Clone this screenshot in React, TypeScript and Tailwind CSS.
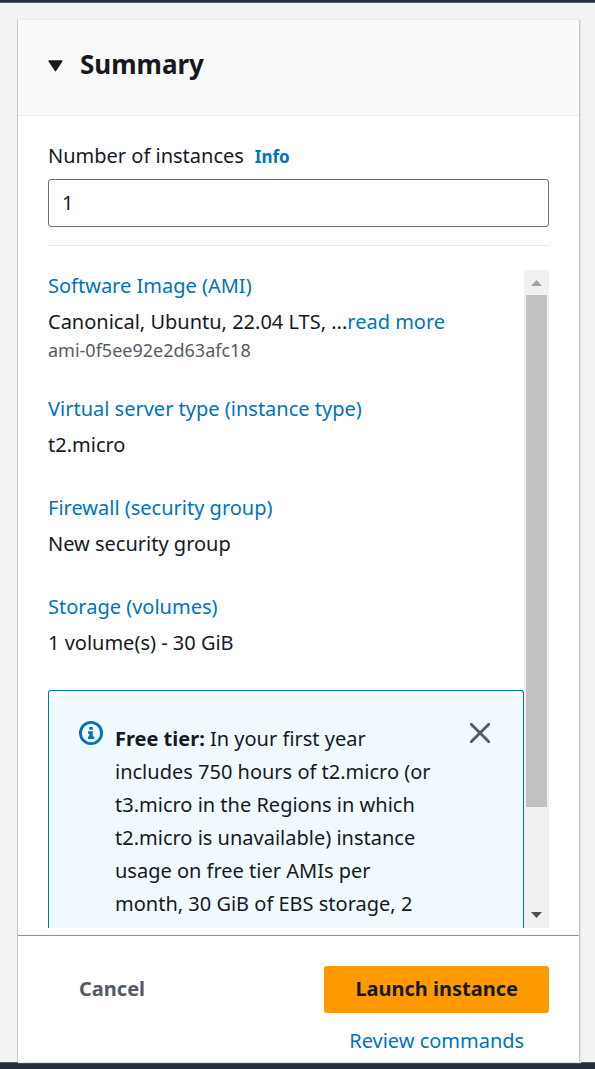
import type { ReactNode } from "react";

function SummaryItem({ title, children }: { title: string; children: ReactNode }) {
  return (
    <section>
      <h3 className="leading-[31px]">
        <a href="#" className="text-[#0073bb]">{title}</a>
      </h3>
      <div className="mt-1 leading-[33px]">{children}</div>
    </section>
  );
}

function InfoIcon() {
  return (
    <svg viewBox="0 0 24 24" className="size-6 shrink-0 text-[#0073bb]" aria-hidden="true">
      <circle cx="12" cy="12" r="10.6" fill="none" stroke="currentColor" strokeWidth="2.8" />
      <path d="M10.2 6h3.6v2.8h-3.6z M9 10.2h4.8v5.2h1.4v2.6H9v-2.6h1.2v-2.6H9z" fill="currentColor" />
    </svg>
  );
}

function ScrollTrack() {
  return (
    <div className="flex w-[25px] shrink-0 flex-col items-center bg-[#f1f1f1]" aria-hidden="true">
      <svg viewBox="0 0 25 25" className="size-[25px] shrink-0">
        <path d="M12.5 10 18 16H7z" fill="#a3a3a3" />
      </svg>
      <div className="flex min-h-0 w-full flex-1 flex-col px-[2px]">
        <div className="grow-[512] bg-[#c1c1c1]" />
        <div className="grow-[96]" />
      </div>
      <svg viewBox="0 0 25 25" className="size-[25px] shrink-0">
        <path d="M7 9h11l-5.5 6z" fill="#505050" />
      </svg>
    </div>
  );
}

export default function App() {
  return (
    <div className="flex h-screen flex-col border-t-2 border-b-[6px] border-[#232f3e] bg-[#f2f3f3] font-['Noto_Sans','Open_Sans',sans-serif] text-[20px] text-[#16191f]">
      <div className="flex min-h-0 flex-1 flex-col border-y border-[#545b64] pr-[15px] pl-[17px]">
        <main className="mt-4 flex min-h-0 flex-1 flex-col border-x border-t border-x-[#c3caca] border-t-[#eaeded] bg-white shadow-[1px_1px_1px_0_#dfe3e3]">
          <header className="flex h-24 shrink-0 items-center border-b border-[#eaeded] bg-[#fafafa] px-[30px] pb-[6px]">
            <h2>
              <button type="button" className="flex items-center gap-[17px] text-[26px] font-bold">
                <svg viewBox="0 0 15 14" className="h-[14px] w-[15px]" aria-hidden="true">
                  <path d="M1.2 3h12.6L7.5 12.6z" fill="currentColor" stroke="currentColor" strokeWidth="1.5" strokeLinejoin="round" />
                </svg>
                Summary
              </button>
            </h2>
          </header>

          <div className="flex min-h-0 flex-1 flex-col px-[30px] pt-[23px] pb-[7px]">
            <div className="flex items-baseline gap-[11px] leading-[33px]">
              <label htmlFor="instances">Number of instances</label>
              <a href="#" className="text-[17px] font-bold text-[#0073bb]">Info</a>
            </div>
            <input
              id="instances"
              type="text"
              defaultValue="1"
              className="mt-[6px] h-12 w-full shrink-0 rounded-[3px] border border-[#687078] bg-white px-[13px] pb-[2px]"
            />
            <hr className="mt-[18px] border-[#eaeded]" />

            <div className="mt-6 flex min-h-0 flex-1">
              <div className="flex min-w-0 flex-1 flex-col overflow-hidden">
                <div className="flex shrink-0 flex-col gap-[31px]">
                  <SummaryItem title="Software Image (AMI)">
                    <p>
                      Canonical, Ubuntu, 22.04 LTS, ...
                      <a href="#" className="text-[#0073bb]">read more</a>
                    </p>
                    <p className="text-[18px] leading-6 text-[#545b64]">ami-0f5ee92e2d63afc18</p>
                  </SummaryItem>
                  <SummaryItem title="Virtual server type (instance type)">t2.micro</SummaryItem>
                  <SummaryItem title="Firewall (security group)">New security group</SummaryItem>
                  <SummaryItem title="Storage (volumes)">1 volume(s) - 30 GiB</SummaryItem>
                </div>

                <div role="note" className="mt-[31px] flex flex-1 items-start rounded-t-[3px] border border-b-0 border-[#0073bb] bg-[#f1faff] pt-[30px] pr-[31px] pl-[30px]">
                  <InfoIcon />
                  <p className="ml-3 flex-1 pt-px leading-[33px]">
                    <strong>Free tier:</strong> In your first year includes 750 hours of t2.micro (or t3.micro in
                    the Regions in which t2.micro is unavailable) instance usage on free tier AMIs per month, 30
                    GiB of EBS storage, 2
                  </p>
                  <button type="button" aria-label="Dismiss" className="ml-8 shrink-0 text-[#545b64]">
                    <svg viewBox="0 0 24 24" className="size-6" aria-hidden="true">
                      <path d="M3.2 3.2l17.6 17.6M20.8 3.2L3.2 20.800" stroke="currentColor" strokeWidth="2.8" strokeLinecap="round" />
                    </svg>
                  </button>
                </div>
              </div>
              <ScrollTrack />
            </div>
          </div>

          <footer className="flex shrink-0 items-start justify-between border-t border-[#879596] px-[30px] pt-[30px] pb-[5px]">
            <button type="button" className="h-[47px] px-[31px] pb-[2px] font-bold text-[#545b64]">Cancel</button>
            <div className="flex flex-col items-center">
              <button type="button" className="h-[47px] rounded-[3px] bg-[#ff9900] px-[31px] pb-[2px] font-bold">
                Launch instance
              </button>
              <a href="#" className="mt-[11px] leading-[33px] text-[#0073bb]">Review commands</a>
            </div>
          </footer>
        </main>
      </div>
    </div>
  );
}
